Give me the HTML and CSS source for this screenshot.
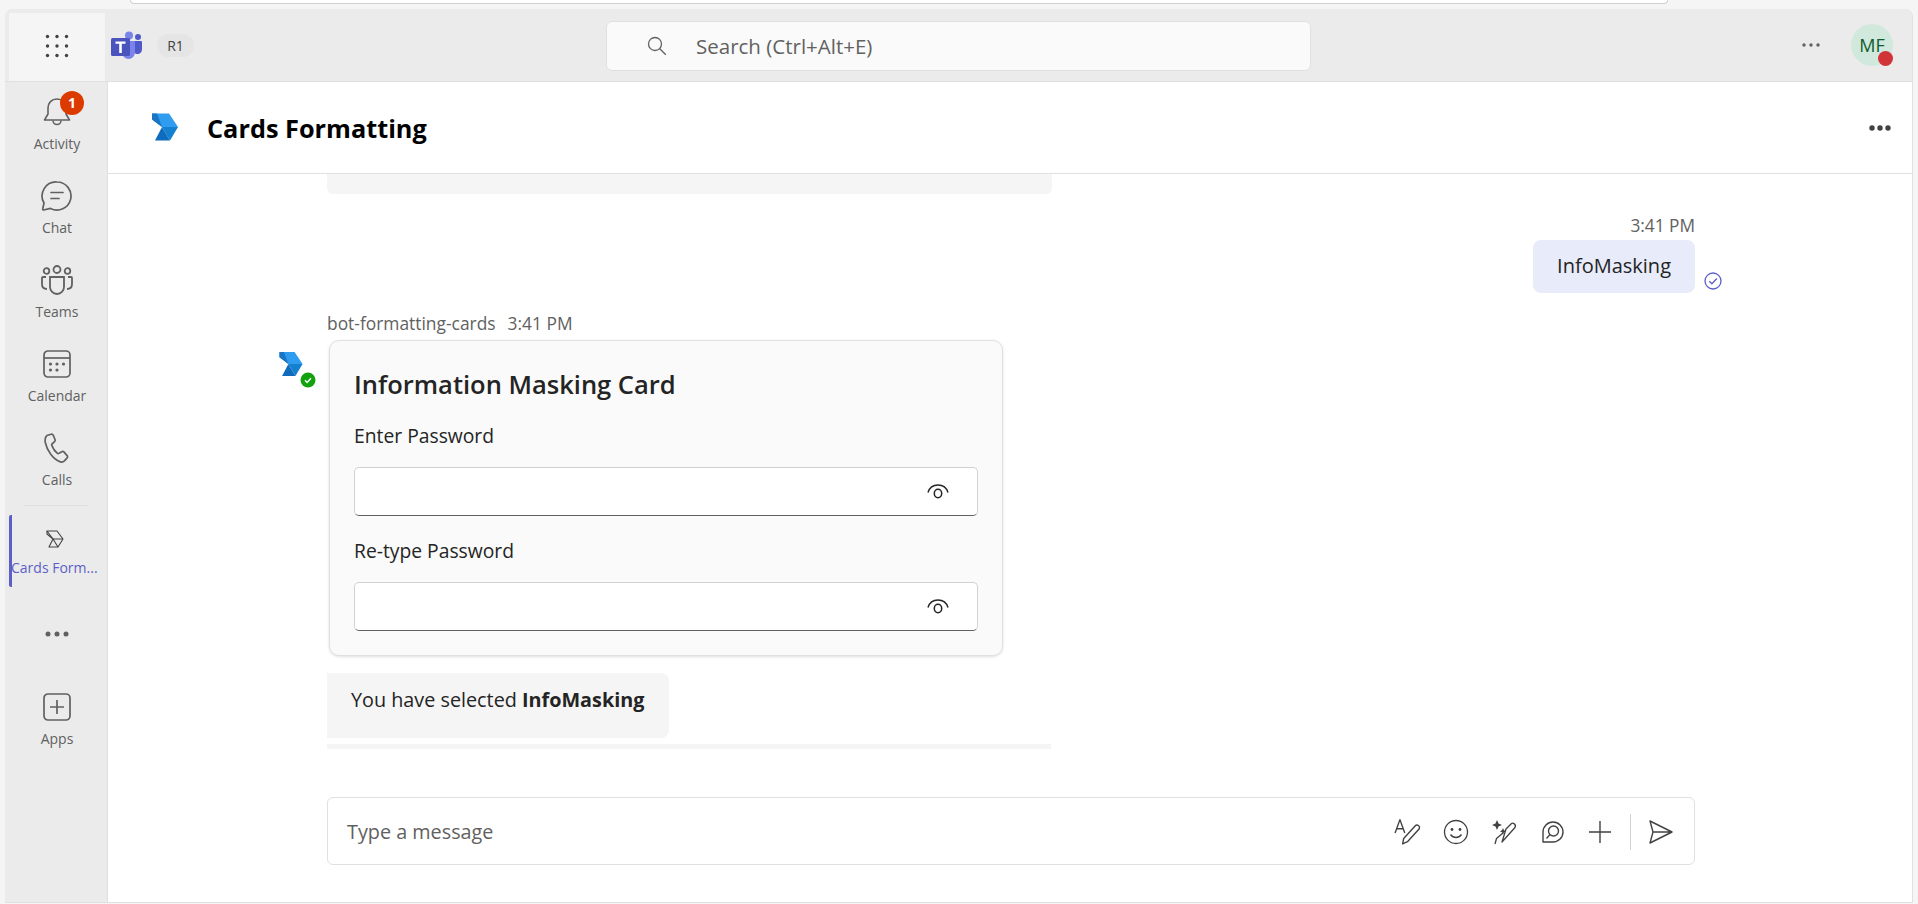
FILE: index.html
```html
<!DOCTYPE html>
<html>
<head>
  <title>Cards Formatting</title>
  <link rel="stylesheet" href="styles.css">
</head>
<body>
  <div class="browser-edge"></div>

  <div class="app">
    <!-- top bar -->
    <div class="topbar">
      <div class="waffle">
        <svg width="24" height="24" viewBox="0 0 24 24" fill="#424242">
          <circle cx="2.5" cy="2.5" r="1.7"/><circle cx="12" cy="2.5" r="1.7"/><circle cx="21.5" cy="2.5" r="1.7"/>
          <circle cx="2.5" cy="12" r="1.7"/><circle cx="12" cy="12" r="1.7"/><circle cx="21.5" cy="12" r="1.7"/>
          <circle cx="2.5" cy="21.5" r="1.7"/><circle cx="12" cy="21.5" r="1.7"/><circle cx="21.5" cy="21.5" r="1.7"/>
        </svg>
      </div>
      <svg class="teams-logo" width="31" height="28" viewBox="0 0 31 28">
        <circle cx="18" cy="4.5" r="4" fill="#7b83eb"/>
        <circle cx="27" cy="6" r="3" fill="#5059c9"/>
        <path d="M22 10h8a1 1 0 0 1 1 1v7c0 3-2 5-4.500 5S22 21 22 18z" fill="#5059c9"/>
        <path d="M11 10h12a1 1 0 0 1 1 1v10c0 4-3 7-6.500 7S11 25 11 21z" fill="#7b83eb"/>
        <rect x="0" y="7" width="19" height="18" rx="1.500" fill="#4b53bc"/>
        <path d="M4.500 10.500h10v2.200h-3.700V22H8.200v-9.300H4.500z" fill="#fff"/>
      </svg>
      <span class="org-pill">R1</span>
      <div class="search">
        <svg width="22" height="22" viewBox="0 0 22 22" fill="none" stroke="#616161" stroke-width="1.300">
          <circle cx="9" cy="9" r="6.500"/><path d="M13.800 13.800l6 6"/>
        </svg>
        <span>Search (Ctrl+Alt+E)</span>
      </div>
      <div class="top-right">
        <svg width="20" height="6" viewBox="0 0 20 6" fill="#616161">
          <circle cx="3" cy="3" r="1.700"/><circle cx="10" cy="3" r="1.700"/><circle cx="17" cy="3" r="1.700"/>
        </svg>
        <div class="avatar">MF<span class="presence"></span></div>
      </div>
    </div>

    <div class="main">
      <!-- left rail -->
      <nav class="rail">
        <div class="rail-item">
          <span class="rail-icon">
            <svg width="28" height="30" viewBox="0 0 28 30" fill="none" stroke="#616161" stroke-width="1.600" stroke-linejoin="round">
              <path d="M14 2c-5.500 0-9 4-9 9v6l-3.500 6h25L23 17v-6c0-5-3.500-9-9-9z"/>
              <path d="M10 23.500a4 4 0 0 0 8 0"/>
            </svg>
            <span class="badge">1</span>
          </span>
          <span class="rail-label">Activity</span>
        </div>
        <div class="rail-item">
          <span class="rail-icon">
            <svg width="32" height="32" viewBox="0 0 32 32" fill="none" stroke="#616161" stroke-width="1.700" stroke-linecap="round" stroke-linejoin="round">
              <path d="M16 2a14 14 0 1 1-6.500 26.400L2.500 30c-.5 0-1-.5-.8-1l1.300-6A14 14 0 0 1 16 2z"/>
              <path d="M10 12.500h12M10 18.500h8"/>
            </svg>
          </span>
          <span class="rail-label">Chat</span>
        </div>
        <div class="rail-item">
          <span class="rail-icon">
            <svg width="32" height="30" viewBox="0 0 32 30" fill="none" stroke="#616161" stroke-width="1.800">
              <circle cx="16" cy="4.500" r="3.500"/><circle cx="5.500" cy="6" r="2.800"/><circle cx="26.500" cy="6" r="2.800"/>
              <path d="M9 12h14v10a7 7 0 0 1-14 0z"/>
              <path d="M5 12H2a1 1 0 0 0-1 1v6c0 3 2 5 5 5M27 12h3a1 1 0 0 1 1 1v6c0 3-2 5-5 5"/>
            </svg>
          </span>
          <span class="rail-label">Teams</span>
        </div>
        <div class="rail-item">
          <span class="rail-icon">
            <svg width="28" height="28" viewBox="0 0 28 28" fill="none" stroke="#616161" stroke-width="1.700">
              <rect x="1" y="1" width="26" height="26" rx="4"/>
              <path d="M1 8h26"/>
              <g fill="#616161" stroke="none">
                <circle cx="7.500" cy="14" r="1.600"/><circle cx="14" cy="14" r="1.600"/><circle cx="20.500" cy="14" r="1.600"/>
                <circle cx="7.500" cy="20" r="1.600"/><circle cx="14" cy="20" r="1.600"/>
              </g>
            </svg>
          </span>
          <span class="rail-label">Calendar</span>
        </div>
        <div class="rail-item">
          <span class="rail-icon">
            <svg width="26" height="30" viewBox="0 0 26 30" fill="none" stroke="#616161" stroke-width="1.700" stroke-linejoin="round">
              <path d="M3 2.500L7 1.200c1-.3 1.800.2 2.200 1l1.800 4.300c.3.800.1 1.600-.5 2.200L8 11c-.5.500-.4 1 0 1.900 1.200 3 3 5.500 5.200 7.300.6.500 1.200.4 1.800.1l2.800-1.600c.8-.4 1.700-.3 2.300.4l3 3.500c.6.700.6 1.600 0 2.300l-2.700 3c-1 1-2.500 1.500-4 1C9.500 26.500 3 18 1.300 9.500.8 6.500 1 4 3 2.500z"/>
            </svg>
          </span>
          <span class="rail-label">Calls</span>
        </div>
        <div class="rail-sep"></div>
        <div class="rail-item rail-active">
          <span class="rail-icon">
            <svg width="18" height="18" viewBox="0 0 18 18" fill="none" stroke="#424242" stroke-width="1.100" stroke-linejoin="round">
              <path d="M1 1h10l6 8-5 8H3l4-8z"/><path d="M1 1v3l6 5h10M7 9l5 8"/>
            </svg>
          </span>
          <span class="rail-label">Cards Form...</span>
        </div>
        <div class="rail-more">
          <svg width="24" height="6" viewBox="0 0 24 6" fill="#616161">
            <circle cx="3" cy="3" r="2.500"/><circle cx="12" cy="3" r="2.500"/><circle cx="21" cy="3" r="2.500"/>
          </svg>
        </div>
        <div class="rail-item rail-apps">
          <span class="rail-icon">
            <svg width="28" height="28" viewBox="0 0 28 28" fill="none" stroke="#616161" stroke-width="1.700">
              <rect x="1" y="1" width="26" height="26" rx="4"/>
              <path d="M14 7v14M7 14h14"/>
            </svg>
          </span>
          <span class="rail-label">Apps</span>
        </div>
      </nav>

      <div class="content">
        <div class="header">
          <svg class="app-logo" width="26" height="28" viewBox="0 0 26 27">
            <path d="M0 0h17l9 13.500H10L0 6z" fill="#2f9cf0"/>
            <path d="M0 0l5 0 5 13.500L0 6z" fill="#1a76c4"/>
            <path d="M10 13.500h16L18 27z" fill="#1380d0"/>
            <path d="M10 13.500L18 27H3z" fill="#0f6cbd"/>
          </svg>
          <h1>Cards Formatting</h1>
          <svg class="header-more" width="22" height="6" viewBox="0 0 22 6" fill="#424242">
            <circle cx="3" cy="3" r="2.700"/><circle cx="11" cy="3" r="2.700"/><circle cx="19" cy="3" r="2.700"/>
          </svg>
        </div>

        <div class="thread">
          <div class="old-bubble"></div>

          <div class="my-message">
            <div class="my-time">3:41 PM</div>
            <div class="my-bubble">InfoMasking</div>
            <svg class="sent-check" width="18" height="18" viewBox="0 0 18 18" fill="none" stroke="#5b5fc7" stroke-width="1.300">
              <circle cx="9" cy="9" r="8"/><path d="M5.300 9.200l2.600 2.600 5-5.300"/>
            </svg>
          </div>

          <div class="bot-meta"><span>bot-formatting-cards</span><span>3:41 PM</span></div>

          <div class="bot-message">
            <div class="bot-avatar">
              <svg width="24" height="24" viewBox="0 0 26 27">
                <path d="M0 0h17l9 13.500H10L0 6z" fill="#2f9cf0"/>
                <path d="M0 0l5 0 5 13.500L0 6z" fill="#1a76c4"/>
                <path d="M10 13.500h16L18 27z" fill="#1380d0"/>
                <path d="M10 13.500L18 27H3z" fill="#0f6cbd"/>
              </svg>
              <svg class="bot-status" width="16" height="16" viewBox="0 0 16 16">
                <circle cx="8" cy="8" r="7.500" fill="#13a10e"/>
                <path d="M5 8.300l2.100 2.100L11 6.200" fill="none" stroke="#fff" stroke-width="1.400"/>
              </svg>
            </div>
            <div class="card">
              <h2>Information Masking Card</h2>
              <label class="field-label">Enter Password</label>
              <div class="field">
                <svg width="24" height="18" viewBox="0 0 24 18" fill="none" stroke="#242424" stroke-width="1.500">
                  <path d="M2 9.500C3.500 4.500 7.500 2 12 2s8.500 2.500 10 7.500"/><ellipse cx="12" cy="10.500" rx="3.700" ry="4.200"/>
                </svg>
              </div>
              <label class="field-label field-label-2">Re-type Password</label>
              <div class="field">
                <svg width="24" height="18" viewBox="0 0 24 18" fill="none" stroke="#242424" stroke-width="1.500">
                  <path d="M2 9.500C3.500 4.500 7.500 2 12 2s8.500 2.500 10 7.500"/><ellipse cx="12" cy="10.500" rx="3.700" ry="4.200"/>
                </svg>
              </div>
            </div>
          </div>

          <div class="bot-bubble">You have selected <b>InfoMasking</b></div>
          <div class="cut-bubble"></div>
        </div>

        <div class="compose">
          <span class="compose-text">Type a message</span>
          <div class="compose-tools">
            <svg class="format-icon" width="28" height="28" viewBox="0 0 26 26" fill="none" stroke="#424242" stroke-width="1.300" stroke-linejoin="round">
              <path d="M1 14L5.500 1.500 10 14M2.500 10h6"/>
              <path d="M8 24l1-5L20 7c1.500-1.500 4.500 .5 3.500 3L12.500 22z"/>
            </svg>
            <svg width="26" height="26" viewBox="0 0 26 26" fill="none" stroke="#424242" stroke-width="1.300">
              <circle cx="13" cy="13" r="11.500"/>
              <circle cx="9" cy="10.500" r="1.400" fill="#424242" stroke="none"/><circle cx="17" cy="10.500" r="1.400" fill="#424242" stroke="none"/>
              <path d="M7.500 15.500c3 4 8 4 11 0"/>
            </svg>
            <svg width="26" height="26" viewBox="0 0 26 26" fill="none" stroke="#424242" stroke-width="1.300" stroke-linejoin="round">
              <path d="M5 1l1.500 3.500L10 6 6.500 7.500 5 11 3.500 7.500 0 6l3.500-1.500z" fill="#424242" stroke="none"/>
              <path d="M11 9l1 2.200 2.200 1-2.200 1-1 2.200-1-2.200-2.200-1 2.200-1z" fill="#424242" stroke="none"/>
              <path d="M3 25l1.500-5.500L11 14M14 10l5-5c2-2 5.500 .5 4 3.500L10 23z"/>
            </svg>
            <svg width="24" height="24" viewBox="0 0 24 24" fill="none" stroke="#424242" stroke-width="1.400" stroke-linejoin="round">
              <path d="M2 22V12a10 10 0 1 1 10 10z"/>
              <circle cx="12.500" cy="11" r="5"/><path d="M9 14.500L5.500 18.500"/>
            </svg>
            <svg width="24" height="24" viewBox="0 0 24 24" fill="none" stroke="#424242" stroke-width="1.400">
              <path d="M12 1v22M1 12h22"/>
            </svg>
            <span class="compose-sep"></span>
            <svg class="send" width="26" height="24" viewBox="0 0 26 24" fill="none" stroke="#424242" stroke-width="1.400" stroke-linejoin="round">
              <path d="M2 1l22 11L2 23l3-11zM5 12h19"/>
            </svg>
          </div>
        </div>
      </div>
    </div>
  </div>
</body>
</html>
```

FILE: styles.css
```css
/* page */

* {
  box-sizing: border-box;
}

body {
  margin: 0;
  height: 904px;
  overflow: hidden;
  background-color: #f5f5f5;
  font-family: "Open Sans", "Noto Sans", sans-serif;
  color: #242424;
}

.browser-edge {
  height: 4px;
  margin: 0 250px 0 130px;
  background-color: #fff;
  border: 1px solid #d1d1d1;
  border-top: none;
  border-radius: 0 0 12px 12px;
}

.app {
  height: 894px;
  margin: 5px 5px 0 5px;
  border-right: 1px solid #e0e0e0;
  border-bottom: 1px solid #e0e0e0;
  border-radius: 8px 8px 0 0;
  overflow: hidden;
  display: flex;
  flex-direction: column;
  background-color: #ebebeb;
}

/* top bar */

.topbar {
  height: 73px;
  flex: none;
  display: flex;
  align-items: center;
  background-color: #ebebeb;
  border-bottom: 1px solid #e0e0e0;
  position: relative;
}

.waffle {
  width: 96px;
  height: 68px;
  margin: 4px 0 0 4px;
  display: flex;
  align-items: center;
  justify-content: center;
  background-color: #f5f5f5;
  padding-bottom: 3px;
}

.teams-logo {
  margin-left: 6px;
}

.org-pill {
  margin-left: 15px;
  width: 37px;
  height: 23px;
  border-radius: 12px;
  background-color: #e5e5e5;
  color: #424242;
  font-size: 14px;
  line-height: 23px;
  text-align: center;
}

.search {
  position: absolute;
  left: 601px;
  top: 12px;
  width: 705px;
  height: 50px;
  display: flex;
  align-items: center;
  padding-left: 42px;
  gap: 28px;
  background-color: #fafafa;
  border: 1px solid #e0e0e0;
  border-radius: 6px;
  font-size: 20.500px;
  color: #616161;
}

.search svg {
  margin-left: -3px;
}

.top-right {
  margin-left: auto;
  display: flex;
  align-items: center;
  gap: 30px;
  padding-right: 19px;
}

.avatar {
  width: 42px;
  height: 42px;
  border-radius: 50%;
  background-color: #d0e9dc;
  color: #0e5c2f;
  font-size: 18px;
  line-height: 42px;
  text-align: center;
  position: relative;
}

.presence {
  position: absolute;
  right: 0;
  bottom: 0;
  width: 15px;
  height: 15px;
  border-radius: 50%;
  background-color: #d13438;
}

/* left rail */

.main {
  flex: 1;
  display: flex;
  min-height: 0;
}

.rail {
  width: 103px;
  flex: none;
  padding-left: 2px;
  border-right: 1px solid #e0e0e0;
  background-color: #ebebeb;
  display: flex;
  flex-direction: column;
  align-items: stretch;
}

.rail-item {
  height: 84px;
  display: flex;
  flex-direction: column;
  align-items: center;
  padding-top: 13px;
  position: relative;
}

.rail-icon {
  height: 34px;
  display: flex;
  align-items: center;
  justify-content: center;
  position: relative;
}

.rail-label {
  margin-top: 5px;
  font-size: 14px;
  line-height: 20px;
  color: #616161;
  white-space: nowrap;
}

.badge {
  position: absolute;
  left: 17px;
  top: -4px;
  width: 24px;
  height: 24px;
  border-radius: 50%;
  background-color: #dc3b00;
  color: #fff;
  font-size: 14px;
  font-weight: 700;
  line-height: 24px;
  text-align: center;
}

.rail-sep {
  height: 1px;
  margin: 3px 18px 9px 17px;
  background-color: #e0e0e0;
}

.rail-active {
  height: 72px;
  padding-top: 7px;
  margin-left: 2px;
  border-left: 3px solid #5b5fc7;
  border-radius: 2px;
  align-items: flex-start;
}

.rail-active .rail-icon {
  align-self: center;
  margin-left: -9px;
}

.rail-active .rail-label {
  margin-top: 2px;
  margin-left: -1px;
  color: #5b5fc7;
}

.rail-more {
  height: 24px;
  margin-top: 35px;
  display: flex;
  align-items: center;
  justify-content: center;
}

.rail-apps {
  margin-top: 31px;
}

/* content */

.content {
  flex: 1;
  min-width: 0;
  background-color: #fff;
  display: flex;
  flex-direction: column;
}

.header {
  height: 92px;
  flex: none;
  display: flex;
  align-items: center;
  padding: 0 21px 0 44px;
  border-bottom: 1px solid #e0e0e0;
}

.app-logo {
  margin-top: -1px;
}

.header h1 {
  margin: 0 0 0 29px;
  font-size: 25.300px;
  font-weight: 700;
  color: #000;
}

.header-more {
  margin-left: auto;
}

.thread {
  flex: 1;
  padding: 0 217px 0 219px;
}

.old-bubble {
  width: 725px;
  height: 20px;
  background-color: #f5f5f5;
  border-radius: 0 0 6px 6px;
}

.my-message {
  margin-top: 20px;
  display: flex;
  flex-direction: column;
  align-items: flex-end;
  position: relative;
}

.my-time {
  height: 26px;
  font-size: 17.300px;
  line-height: 23px;
  color: #616161;
}

.my-bubble {
  height: 53px;
  padding: 0 24px;
  border-radius: 8px;
  background-color: #e8ebfa;
  font-size: 20px;
  line-height: 52px;
}

.sent-check {
  position: absolute;
  right: -27px;
  bottom: 3px;
}

.bot-meta {
  margin-top: 18px;
  display: flex;
  gap: 12px;
  font-size: 17.400px;
  line-height: 24px;
  color: #616161;
}

.bot-message {
  position: relative;
  margin-top: 5px;
}

.bot-avatar {
  position: absolute;
  left: -48px;
  top: 12px;
  width: 38px;
  height: 40px;
}

.bot-status {
  position: absolute;
  left: 21px;
  top: 20px;
}

.card {
  width: 674px;
  height: 316px;
  margin-left: 2px;
  padding: 25px 24px 0 24px;
  background-color: #fafafa;
  border: 1px solid #e0e0e0;
  border-radius: 10px;
  box-shadow: 0 1px 3px rgba(0, 0, 0, 0.12);
}

.card h2 {
  margin: 0;
  font-size: 25.500px;
  font-weight: 600;
  line-height: 36px;
}

.field-label {
  display: block;
  margin-top: 20px;
  font-size: 19.300px;
  line-height: 28px;
}

.field-label-2 {
  margin-top: 21px;
}

.field {
  height: 49px;
  margin-top: 17px;
  display: flex;
  align-items: center;
  justify-content: flex-end;
  padding-right: 27px;
  background-color: #fff;
  border: 1px solid #d1d1d1;
  border-bottom-color: #616161;
  border-radius: 5px;
}

.bot-bubble {
  width: 342px;
  height: 65px;
  margin-top: 17px;
  padding: 12px 0 0 24px;
  background-color: #f5f5f5;
  border-radius: 0 8px 8px 0;
  font-size: 19.800px;
  line-height: 30px;
}

.cut-bubble {
  width: 724px;
  height: 5px;
  margin-top: 6px;
  background-color: #f5f5f5;
}

.compose {
  height: 68px;
  flex: none;
  margin: 0 217px 37px 219px;
  display: flex;
  align-items: center;
  padding: 0 20px 0 19px;
  background-color: #fff;
  border: 1px solid #e0e0e0;
  border-radius: 6px;
}

.compose-text {
  font-size: 19.800px;
  color: #616161;
}

.compose-tools {
  margin-left: auto;
  margin-top: 2px;
  display: flex;
  align-items: center;
  gap: 23px;
}

.format-icon {
  margin-right: -2px;
}

.compose-sep {
  width: 1px;
  height: 36px;
  margin-left: -5px;
  background-color: #d1d1d1;
}

.send {
  margin-left: -6px;
}
```
